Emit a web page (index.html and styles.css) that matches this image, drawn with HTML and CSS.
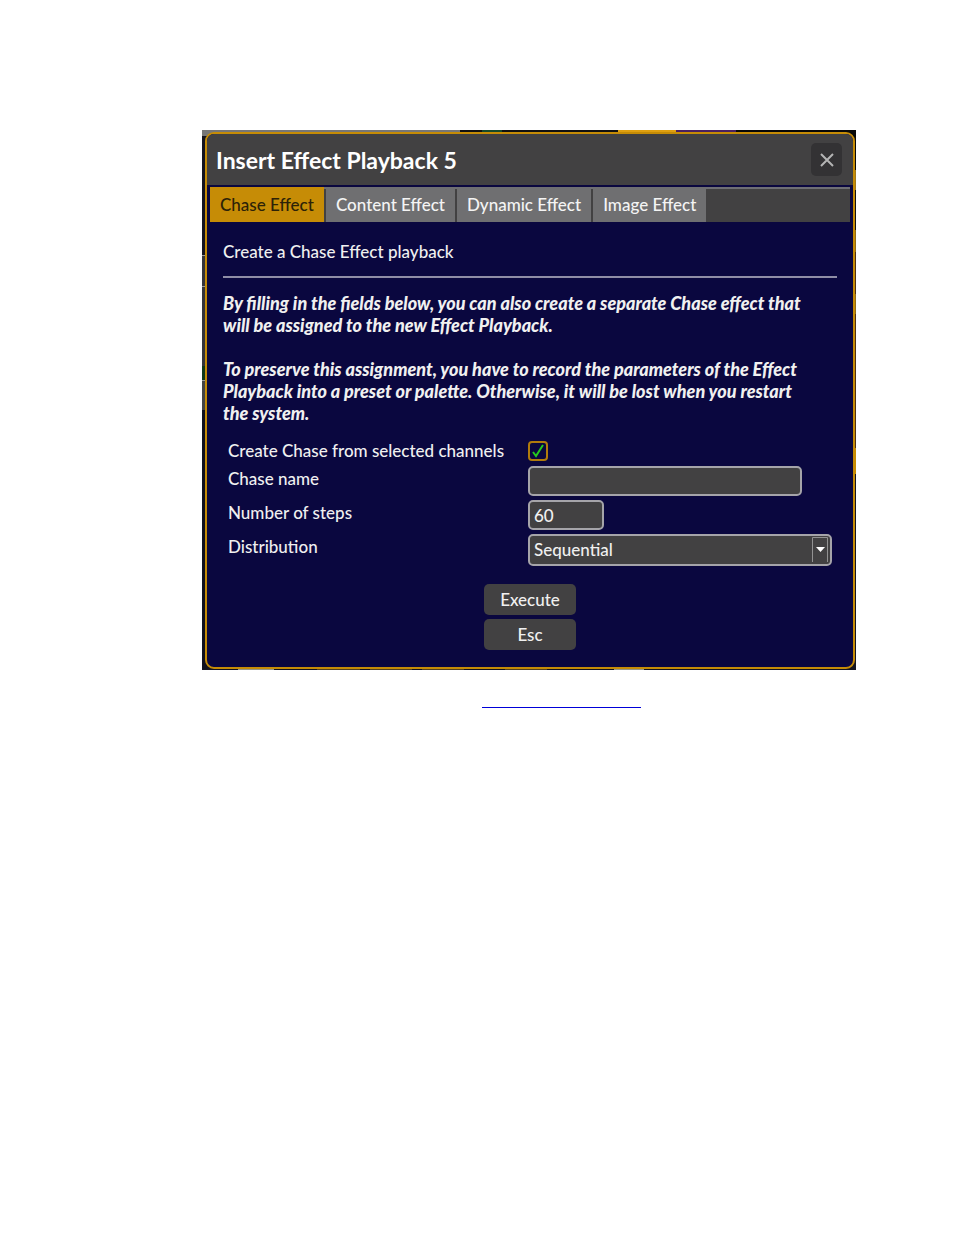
FILE: index.html
```html
<!DOCTYPE html>
<html lang="en">
<head>
<meta charset="utf-8">
<title>Insert Effect Playback 5</title>
<link rel="stylesheet" href="styles.css">
</head>
<body>
<main class="page">
  <div class="desk">
    <section class="dialog" role="dialog" aria-labelledby="dialog-title">
      <header class="dialog-header">
        <h1 class="dialog-title" id="dialog-title">Insert Effect Playback 5</h1>
        <button class="close" type="button" aria-label="Close">
          <svg width="14" height="14" viewBox="0 0 14 14" fill="none" stroke="#b4b4b4" stroke-width="2"><path d="M1 1l12 12M13 1L1 13"/></svg>
        </button>
      </header>
      <div class="tabs" role="tablist">
        <button class="tab tab-active" type="button" role="tab" aria-selected="true">Chase Effect</button>
        <button class="tab" type="button" role="tab" aria-selected="false">Content Effect</button>
        <button class="tab" type="button" role="tab" aria-selected="false">Dynamic Effect</button>
        <button class="tab" type="button" role="tab" aria-selected="false">Image Effect</button>
      </div>
      <form class="panel">
        <h2 class="panel-title">Create a Chase Effect playback</h2>
        <div class="note">
          <p>By filling in the fields below, you can also create a separate Chase effect that<br>will be assigned to the new Effect Playback.</p>
          <p>To preserve this assignment, you have to record the parameters of the Effect<br>Playback into a preset or palette. Otherwise, it will be lost when you restart<br>the system.</p>
        </div>
        <div class="fields">
          <label for="from-channels">Create Chase from selected channels</label>
          <input class="check" id="from-channels" type="checkbox" checked>
          <label class="label-box" for="chase-name">Chase name</label>
          <input class="box box-name" id="chase-name" type="text">
          <label class="label-box" for="steps">Number of steps</label>
          <input class="box box-steps" id="steps" type="text" value="60">
          <label class="label-box" for="distribution">Distribution</label>
          <select class="box box-select" id="distribution"><option>Sequential</option></select>
        </div>
        <div class="actions">
          <button class="action" type="submit">Execute</button>
          <button class="action" type="button">Esc</button>
        </div>
      </form>
    </section>
  </div>
  <a class="link" href="#" aria-label="Related topic"></a>
</main>
</body>
</html>
```

FILE: styles.css
```css
* { box-sizing: border-box; }
body {
  margin: 0;
  background: #fff;
  color: #f0f0f0;
  font: 500 17px/22px Lato, "Noto Sans", sans-serif;
}
button, input, select { font: inherit; color: inherit; margin: 0; }
.page { padding: 130px 98px 24px 202px; }
.desk {
  padding: 2px 1px 1px 3px;
  background:
    linear-gradient(90deg, #777 0 258px, #111 258px 280px, #164a2a 280px 300px, #111 300px 416px, #e0a010 416px 474px, #4a2060 474px 534px, #080808 534px) top / 100% 6px no-repeat,
    linear-gradient(90deg, #14141f 0 36px, #998 36px 72px, #14141f 72px 115px, #54421f 115px 158px, #14141f 158px 168px, #54421f 168px 210px, #14141f 210px 220px, #54421f 220px 262px, #14141f 262px 303px, #54421f 303px 345px, #14141f 345px 412px, #998 412px 442px, #14141f 442px) bottom / 100% 1px no-repeat,
    linear-gradient(#14141f 0 125px, #999 125px 126px, #34343a 126px 156px, #999 156px 157px, #34343a 157px 236px, #103818 236px 250px, #999 250px 251px, #444 251px 280px, #10101c 280px) left / 6px 100% no-repeat,
    linear-gradient(#080808 0 40px, #a07818 40px 60px, #111 60px 100px, #906a14 100px 122px, #503010 122px 164px, #906a14 164px 184px, #503010 184px 318px, #c68a00 318px 344px, #14141f 344px) right / 6px 100% no-repeat,
    #14141f;
}
.dialog {
  border: 2px solid #c68c06;
  border-radius: 9px;
  background: #0a073f;
  overflow: hidden;
}
.dialog-header {
  display: flex;
  align-items: center;
  justify-content: space-between;
  height: 51px;
  padding: 0 11px 0 9px;
  background: #424142;
}
.dialog-title { margin: 0; font-size: 23px; line-height: 30px; font-weight: 700; color: #fff; }
.close {
  display: grid;
  place-items: center;
  width: 31px;
  height: 33px;
  padding: 0;
  border: 0;
  border-radius: 5px;
  background: #333234;
}
.tabs {
  display: flex;
  gap: 2px;
  height: 35px;
  margin: 2px 3px 0;
  background: linear-gradient(#6f6f74 0 2px, #424142 2px);
}
.tab { padding: 0 10px; border: 0; background: #6f6f71; color: #f4f4f4; }
.tab-active { background: #c68c06; color: #2c2208; }
.panel { padding: 19px 16px 17px; }
.panel-title {
  margin: 0;
  padding-bottom: 13px;
  border-bottom: 2px solid #8f8da6;
  font-size: 17px;
  font-weight: 500;
}
.note { padding-top: 14px; font-size: 18px; font-weight: 900; font-style: italic; white-space: nowrap; }
.note p { margin: 0 0 22px; }
.note p:last-child { margin: 0; }
.fields {
  display: grid;
  grid-template-columns: 300px 1fr;
  row-gap: 4px;
  padding: 16px 5px 0;
}
.label-box { padding-top: 2px; }
.check {
  appearance: none;
  width: 20px;
  height: 20px;
  margin-top: 1px;
  border: 2px solid #b07b0c;
  border-radius: 4px;
  background: url("data:image/svg+xml,%3Csvg xmlns='http://www.w3.org/2000/svg' viewBox='0 0 16 16'%3E%3Cpath d='M3 9l3 4L13 2' fill='none' stroke='%2326c81e' stroke-width='2'/%3E%3C/svg%3E") center / 16px no-repeat;
}
.box {
  height: 30px;
  padding: 0 4px;
  border: 2px solid #a5a4a9;
  border-radius: 5px;
  background: #424142;
}
.box-name { width: 90%; }
.box-steps { width: 76px; }
.box-select {
  appearance: none;
  width: 100%;
  height: 32px;
  background:
    url("data:image/svg+xml,%3Csvg xmlns='http://www.w3.org/2000/svg' viewBox='0 0 18 28'%3E%3Cpath d='M.5 26V1.500h15V26' fill='none' stroke='%23929292'/%3E%3Cpath d='M4 11h9l-4.500 5z' fill='%23fff'/%3E%3C/svg%3E") right / 18px 28px no-repeat,
    #424142;
}
.actions { display: grid; justify-content: center; gap: 4px; padding-top: 18px; }
.action {
  width: 92px;
  height: 31px;
  padding: 0;
  border: 0;
  border-radius: 5px;
  background: #424142;
}
.link { display: block; width: 159px; height: 38px; margin-left: 280px; border-bottom: 1px solid #0000d8; }
```
